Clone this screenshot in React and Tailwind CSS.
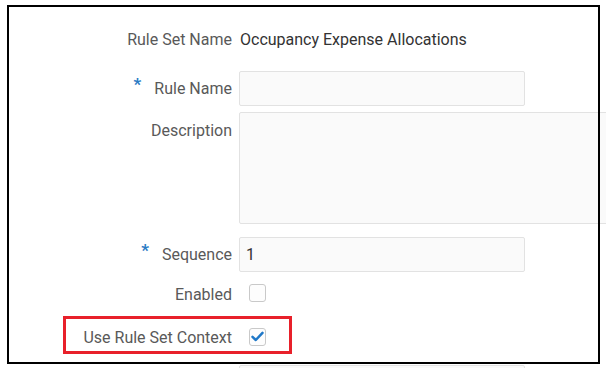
import React from "react";

const Label = ({ children, required, className = "" }) => (
  <div
    className={`w-[232px] shrink-0 flex justify-end items-center text-[#595959] ${className}`}
  >
    {required && (
      <span className="text-[#2a7bc4] font-bold text-[17px] leading-none mr-[13px] -mt-[8px]">
        *
      </span>
    )}
    <span>{children}</span>
  </div>
);

const Checkbox = ({ checked }) => (
  <div className="ml-[10px] w-[17px] h-[18px] rounded-[3px] border border-[#c9c9c9] bg-[#fdfdfd] flex items-center justify-center">
    {checked && (
      <svg width="13" height="11" viewBox="0 0 13 11" fill="none">
        <path
          d="M1.5 5.8 L4.8 9 L11.5 1.8"
          stroke="#1f78c8"
          strokeWidth="2.5"
          strokeLinecap="round"
          strokeLinejoin="round"
        />
      </svg>
    )}
  </div>
);

const App = () => {
  return (
    <div
      className="relative w-[606px] h-[368px] overflow-hidden bg-white text-[16px]"
      style={{ fontFamily: "Roboto, 'Open Sans', sans-serif" }}
    >
      {/* form */}
      <div className="flex flex-col pt-[28px]">
        <div className="flex items-center gap-[8px] h-[24px]">
          <Label>Rule Set Name</Label>
          <span className="text-[#333]">Occupancy Expense Allocations</span>
        </div>

        <div className="flex items-center gap-[7px] mt-[19px]">
          <Label required>Rule Name</Label>
          <div className="w-[286px] h-[35px] rounded-[2px] border border-[#e2e2e2] bg-[#fafafa]"></div>
        </div>

        <div className="flex items-start gap-[7px] mt-[6px]">
          <div className="pt-[7px]">
            <Label>Description</Label>
          </div>
          <div className="w-[380px] h-[112px] shrink-0 rounded-[2px] border border-[#e2e2e2] bg-[#fafafa]"></div>
        </div>

        <div className="flex items-center gap-[7px] mt-[13px]">
          <Label required>Sequence</Label>
          <div className="w-[286px] h-[35px] rounded-[2px] border border-[#e2e2e2] bg-[#fafafa] flex items-center px-[6px] text-[#333]">
            1
          </div>
        </div>

        <div className="flex items-center gap-[7px] mt-[12px] h-[18px]">
          <Label className="pt-[4px]">Enabled</Label>
          <Checkbox />
        </div>

        <div className="flex items-center gap-[7px] mt-[26px] h-[17px]">
          <Label className="pt-[3px]">Use Rule Set Context</Label>
          <Checkbox checked />
        </div>

        <div className="flex items-center gap-[7px] mt-[20px]">
          <div className="w-[232px]"></div>
          <div className="w-[286px] h-[35px] rounded-[2px] border border-[#e2e2e2] bg-[#fafafa]"></div>
        </div>
      </div>

      {/* annotation highlight */}
      <div className="absolute left-[63px] top-[316px] w-[229px] h-[38px] border-[3px] border-[#e8202a] pointer-events-none"></div>

      {/* screenshot frame */}
      <div className="absolute left-[7px] top-[5px] w-[593px] h-[359px] border-2 border-black pointer-events-none"></div>
    </div>
  );
};

export default App;
